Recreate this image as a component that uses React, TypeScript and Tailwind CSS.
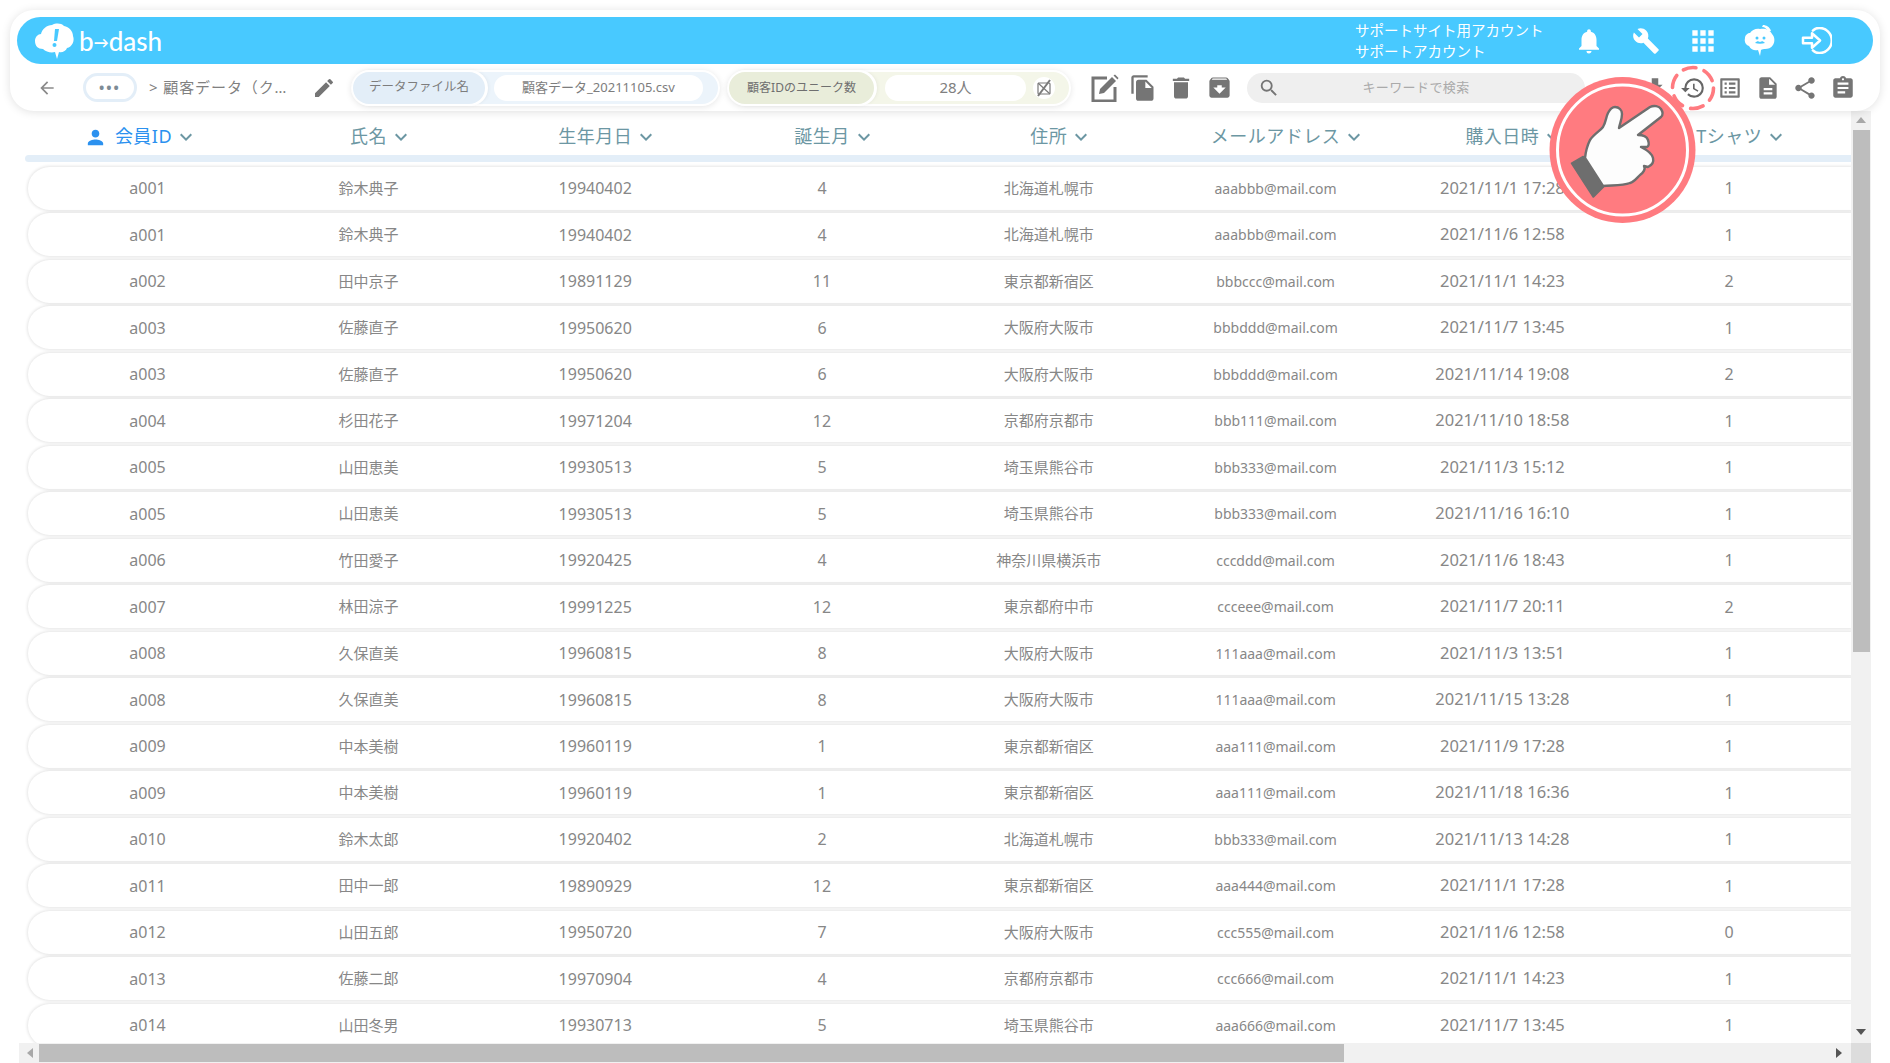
import React from 'react';
import {
  MdApps,
  MdArchive,
  MdArrowBack,
  MdAssignment,
  MdBuild,
  MdDelete,
  MdDescription,
  MdEdit,
  MdFileCopy,
  MdFileDownload,
  MdHistory,
  MdKeyboardArrowDown,
  MdListAlt,
  MdNotifications,
  MdPerson,
  MdSearch,
  MdShare,
} from 'react-icons/md';

const font = "font-['Noto_Sans','Noto_Sans_CJK_JP',sans-serif]";

const columns = ['会員ID', '氏名', '生年月日', '誕生月', '住所', 'メールアドレス', '購入日時', 'Tシャツ'];

const rows = [
  ['a001', '鈴木典子', '19940402', '4', '北海道札幌市', 'aaabbb@mail.com', '2021/11/1 17:28', '1'],
  ['a001', '鈴木典子', '19940402', '4', '北海道札幌市', 'aaabbb@mail.com', '2021/11/6 12:58', '1'],
  ['a002', '田中京子', '19891129', '11', '東京都新宿区', 'bbbccc@mail.com', '2021/11/1 14:23', '2'],
  ['a003', '佐藤直子', '19950620', '6', '大阪府大阪市', 'bbbddd@mail.com', '2021/11/7 13:45', '1'],
  ['a003', '佐藤直子', '19950620', '6', '大阪府大阪市', 'bbbddd@mail.com', '2021/11/14 19:08', '2'],
  ['a004', '杉田花子', '19971204', '12', '京都府京都市', 'bbb111@mail.com', '2021/11/10 18:58', '1'],
  ['a005', '山田恵美', '19930513', '5', '埼玉県熊谷市', 'bbb333@mail.com', '2021/11/3 15:12', '1'],
  ['a005', '山田恵美', '19930513', '5', '埼玉県熊谷市', 'bbb333@mail.com', '2021/11/16 16:10', '1'],
  ['a006', '竹田愛子', '19920425', '4', '神奈川県横浜市', 'cccddd@mail.com', '2021/11/6 18:43', '1'],
  ['a007', '林田涼子', '19991225', '12', '東京都府中市', 'ccceee@mail.com', '2021/11/7 20:11', '2'],
  ['a008', '久保直美', '19960815', '8', '大阪府大阪市', '111aaa@mail.com', '2021/11/3 13:51', '1'],
  ['a008', '久保直美', '19960815', '8', '大阪府大阪市', '111aaa@mail.com', '2021/11/15 13:28', '1'],
  ['a009', '中本美樹', '19960119', '1', '東京都新宿区', 'aaa111@mail.com', '2021/11/9 17:28', '1'],
  ['a009', '中本美樹', '19960119', '1', '東京都新宿区', 'aaa111@mail.com', '2021/11/18 16:36', '1'],
  ['a010', '鈴木太郎', '19920402', '2', '北海道札幌市', 'bbb333@mail.com', '2021/11/13 14:28', '1'],
  ['a011', '田中一郎', '19890929', '12', '東京都新宿区', 'aaa444@mail.com', '2021/11/1 17:28', '1'],
  ['a012', '山田五郎', '19950720', '7', '大阪府大阪市', 'ccc555@mail.com', '2021/11/6 12:58', '0'],
  ['a013', '佐藤二郎', '19970904', '4', '京都府京都市', 'ccc666@mail.com', '2021/11/1 14:23', '1'],
  ['a014', '山田冬男', '19930713', '5', '埼玉県熊谷市', 'aaa666@mail.com', '2021/11/7 13:45', '1'],
];

// per-column text size so the widths line up with the picture
const cellSize = [
  'text-[16px]',
  'text-[15px]',
  'text-[16px]',
  'text-[16px]',
  'text-[15px]',
  'text-[14px]',
  'text-[16.5px]',
  'text-[16px]',
];

const Logo = () => (
  <div className="ml-[18px] flex items-center text-white">
    <svg width="40" height="38" viewBox="0 0 40 38">
      <path
        d="M8 27c-5 0-8-3-8-8 0-4 3-7 6-7 1-5 6-9 11-9 4-2 9-2 12 1 5 1 9 5 9 10 2 5-1 11-6 12-1 3-5 5-8 4l-2 7-2-7c-4 1-9 0-12-3z"
        fill="#fff"
      />
      <path d="M20 7l4 0-2 12-3 0z" fill="#48c9ff" />
      <circle cx="19.5" cy="23" r="2" fill="#48c9ff" />
    </svg>
    <span className="ml-[4px] font-['Lato',sans-serif] text-[26px] leading-none font-medium">
      b<span className="align-[3px] text-[15px] font-bold">→</span>dash
    </span>
  </div>
);

const BrainFace = () => (
  <svg width="32" height="34" viewBox="0 0 32 34">
    <path
      d="M5 22c-3-1-5-4-4-8 0-3 3-5 5-5 2-3 6-5 10-4 5-1 10 1 12 5 3 3 3 8 1 11-2 3-5 4-8 4-1 0-3 0-4 1l-1 6-2-6c-3 1-7 0-9-4z"
      fill="#fff"
    />
    <path d="M19 1c3 0 7 2 8 6l-3 1c-1-3-3-5-6-5z" fill="#fff" />
    <circle cx="13" cy="14" r="1.5" fill="#48c9ff" />
    <circle cx="20" cy="14" r="1.5" fill="#48c9ff" />
    <path d="M11 19c2-2 3-2 5-1 2-1 3-1 5 1-3 1-7 1-10 0z" fill="#48c9ff" />
  </svg>
);

const LoginIcon = () => (
  <svg width="31" height="27" viewBox="0 0 34 30" fill="none" stroke="#fff" strokeWidth="2.8">
    <path d="M13 4c2-2 5-3 7-3a14 14 0 0 1 0 28c-2 0-5-1-7-3" strokeLinecap="round" />
    <path d="M2 12h10V7l9 8-9 8v-5H2z" strokeLinejoin="round" />
  </svg>
);

const EditBox = () => (
  <svg width="28" height="28" viewBox="0 0 28 28" className="text-[#757575]">
    <path d="M16 4H2v23h22V13" fill="none" stroke="currentColor" strokeWidth="3" />
    <path d="M8 20l1-5L21 3l4 4-12 12z" fill="currentColor" />
    <path d="M22.5 1.5l1.5-1 3.5 3.5-1 1.5z" fill="currentColor" />
  </svg>
);

const NoChartIcon = () => (
  <svg width="20" height="20" viewBox="0 0 20 20" fill="none" stroke="#7a7a7a">
    <rect x="4" y="5" width="12" height="11" rx="1" strokeWidth="1.2" />
    <path d="M4 5l12 11" strokeWidth="1.2" />
    <path d="M16 2L4 18" strokeWidth="2" />
  </svg>
);

const HandBadge = () => (
  <svg width="147" height="146" viewBox="0 0 147 146" className="absolute left-[1549px] top-[77px] z-20">
    <circle cx="73.5" cy="73" r="73" fill="#ff7b80" />
    <circle cx="73.5" cy="73" r="65" fill="none" stroke="#fff" strokeWidth="3" />
    <path d="M22.7 86.3L34.3 79.7 54.3 109.7 44.3 119.7z" fill="#6e6e6e" stroke="#6e6e6e" strokeWidth="2" strokeLinejoin="round" />
    <path
      d="M36 81C37 72 39 67 41 63 45 57 51 54 54 50 57 45 57 40 59 36 61 32 63 30 66 30 70 30 73 33 73 37 73 42 71 46 70 51L101 30C105 28 110 29 112 32 114 35 114 38 112 40L89 58C94 58 98 60 99 63 100 66 100 69 98 70L92 70C98 73 103 77 104 81 105 85 103 88 99 90L95 89C97 92 94 96 91 98 87 102 85 105 81 106 73 109 62 108 54 109z"
      fill="#fdfdfd"
      stroke="#6e6e6e"
      strokeWidth="2.4"
      strokeLinejoin="round"
    />
  </svg>
);

const HeaderCard = () => (
  <div className="relative z-10 mx-[10px] mt-[10px] h-[101px] shrink-0 rounded-[24px] bg-white p-[7px] shadow-[0_1px_10px_rgba(0,0,0,0.12)]">
    <div className="flex h-[47px] items-center rounded-[24px] bg-[#48c9ff]">
      <Logo />
      <div className="ml-auto w-[206px] text-[14.5px] leading-[21px] text-white">
        <div>サポートサイト用アカウント</div>
        <div>サポートアカウント</div>
      </div>
      <div className="mr-[29px] flex items-center text-white">
        <div className="flex w-[56px] justify-center"><MdNotifications size={30} /></div>
        <div className="flex w-[58px] justify-center"><MdBuild size={28} /></div>
        <div className="flex w-[56px] justify-center"><MdApps size={32} /></div>
        <div className="flex w-[57px] justify-center"><BrainFace /></div>
        <div className="flex w-[56px] justify-center"><LoginIcon /></div>
      </div>
    </div>
    <div className="flex h-[47px] items-center">
      <MdArrowBack size={20} className="ml-[20px] shrink-0 text-[#8a8a8a]" />
      <div className="ml-[26px] flex h-[29px] w-[54px] shrink-0 items-center justify-center rounded-full border-[3px] border-[#e3eef8] bg-white text-[#7d8b95]">
        <span className="text-[14px] leading-none font-bold tracking-[2px]">•••</span>
      </div>
      <div className="ml-[12px] w-[139px] shrink-0 whitespace-nowrap text-[15px] tracking-[0.9px] text-[#808080]">
        &gt; 顧客データ（ク…
      </div>
      <MdEdit size={24} className="ml-[24px] shrink-0 text-[#757575]" />
      <div className="ml-[17px] flex h-[32px] w-[365px] shrink-0 items-center rounded-full bg-[#ecf4fb] shadow-[0_0_0_2px_#fff,0_1px_6px_2px_rgba(0,0,0,0.1)]">
        <div className="flex h-[32px] w-[132px] items-center justify-center rounded-full bg-[#e3eef8] text-[12.5px] text-[#7d7d7d] shadow-[1px_0_0_2px_#fff,2px_0_5px_rgba(0,0,0,0.12)]">
          データファイル名
        </div>
        <div className="ml-[9px] flex h-[26px] w-[209px] items-center justify-center rounded-full bg-white text-[13px] text-[#7d7d7d]">
          顧客データ_20211105.csv
        </div>
      </div>
      <div className="ml-[11px] flex h-[32px] w-[340px] shrink-0 items-center rounded-full bg-[#f4f6e9] shadow-[0_0_0_2px_#fff,0_1px_6px_2px_rgba(0,0,0,0.1)]">
        <div className="flex h-[32px] w-[145px] items-center justify-center rounded-full bg-[#e9edda] text-[12px] text-[#6f6f6f] shadow-[1px_0_0_2px_#fff,2px_0_5px_rgba(0,0,0,0.12)]">
          顧客IDのユニーク数
        </div>
        <div className="ml-[11px] flex h-[26px] w-[141px] items-center justify-center rounded-full bg-white text-[15px] text-[#808080]">
          28人
        </div>
        <div className="ml-[7px] flex h-[22px] w-[22px] items-center justify-center rounded-full bg-white">
          <NoChartIcon />
        </div>
      </div>
      <div className="ml-[22px] flex shrink-0 items-center gap-[10px] text-[#757575]">
        <div className="flex w-[28px] justify-center"><EditBox /></div>
        <div className="flex w-[28px] justify-center"><MdFileCopy size={28} /></div>
        <div className="flex w-[28px] justify-center"><MdDelete size={28} /></div>
        <div className="flex w-[28px] justify-center"><MdArchive size={27} /></div>
      </div>
      <div className="relative ml-[14px] flex h-[30px] w-[338px] shrink-0 items-center justify-center rounded-full bg-[#efefef]">
        <MdSearch size={22} className="absolute left-[11px] top-[4px] text-[#757575]" />
        <span className="text-[13px] tracking-[0.4px] text-[#aaaaaa]">キーワードで検索</span>
      </div>
      <div className="ml-[57px] flex shrink-0 items-center gap-[11.6px] text-[#757575]">
        <div className="flex w-[26px] justify-center"><MdFileDownload size={26} /></div>
        <div className="relative flex w-[26px] justify-center">
          <MdHistory size={26} className="text-[#666666]" />
          <svg width="46" height="46" viewBox="0 0 46 46" className="absolute left-[-10px] top-[-10px]">
            <circle cx="23" cy="23" r="20.5" fill="none" stroke="#ff7b80" strokeWidth="3.6" strokeDasharray="13 8.5" strokeLinecap="round" />
          </svg>
        </div>
        <div className="flex w-[26px] justify-center"><MdListAlt size={26} /></div>
        <div className="flex w-[26px] justify-center"><MdDescription size={28} /></div>
        <div className="flex w-[26px] justify-center"><MdShare size={26} /></div>
        <div className="flex w-[26px] justify-center"><MdAssignment size={28} /></div>
      </div>
    </div>
  </div>
);

const TableHead = () => (
  <>
    <div className="mt-[6px] grid h-[38px] shrink-0 grid-cols-[215px_repeat(7,226.8px)] items-center pl-[21px]">
      {columns.map((col, i) => (
        <div key={col} className={`flex justify-center ${i === 0 ? 'pr-[8px]' : ''}`}>
          <span className={`relative whitespace-nowrap text-[18px] tracking-[0.5px] ${i === 0 ? 'text-[#2b91ef]' : 'text-[#6c97a3]'}`}>
            {i === 0 && <MdPerson size={23} className="absolute right-full top-[3px] mr-[8px] text-[#2b91ef]" />}
            {col}
            <MdKeyboardArrowDown size={24} className="absolute left-full top-[2px] ml-[2px] text-[#6c97a3]" />
          </span>
        </div>
      ))}
    </div>
    <div className="ml-[6px] h-[7px] shrink-0 rounded-l-[4px] bg-[#e3eef8]" />
  </>
);

const Row = ({ data }: { data: string[] }) => (
  <div className="ml-[9px] mt-[3.5px] grid h-[43px] shrink-0 grid-cols-[215px_repeat(7,226.8px)] items-center rounded-l-[22px] bg-white pl-[12px] shadow-[0_0_3px_1px_rgba(0,0,0,0.1)]">
    {data.map((v, i) => (
      <div key={i} className={`text-center whitespace-nowrap text-[#878787] ${cellSize[i]}`}>
        {v}
      </div>
    ))}
  </div>
);

export default function App() {
  return (
    <div className={`relative flex h-[1063px] w-[1890px] flex-col overflow-hidden bg-white ${font}`}>
      <HeaderCard />
      <HandBadge />
      <div className="mx-[19px] flex min-h-0 flex-1 flex-col">
        <div className="flex min-h-0 flex-1">
          <div className="flex min-w-0 flex-1 flex-col overflow-hidden">
            <TableHead />
            <div className="mt-[1px] flex flex-col overflow-hidden">
              {rows.map((r, i) => (
                <Row key={i} data={r} />
              ))}
            </div>
          </div>
          <div className="flex w-[20px] shrink-0 flex-col items-center bg-[#f1f1f1]">
            <div className="mt-[6px] h-0 w-0 border-x-[5px] border-b-[6px] border-x-transparent border-b-[#a8a8a8]" />
            <div className="mt-[7px] h-[522px] w-[17px] bg-[#bdbdbd]" />
            <div className="mt-auto mb-[8px] h-0 w-0 border-x-[5px] border-t-[6px] border-x-transparent border-t-[#555555]" />
          </div>
        </div>
        <div className="flex h-[20px] shrink-0 items-center bg-[#f1f1f1]">
          <div className="ml-[8px] h-0 w-0 border-y-[5px] border-r-[6px] border-y-transparent border-r-[#a8a8a8]" />
          <div className="ml-[6px] h-[18px] w-[1305px] bg-[#bdbdbd]" />
          <div className="ml-auto mr-[9px] h-0 w-0 border-y-[5px] border-l-[6px] border-y-transparent border-l-[#555555]" />
          <div className="h-[20px] w-[20px] bg-[#dcdcdc]" />
        </div>
      </div>
    </div>
  );
}
